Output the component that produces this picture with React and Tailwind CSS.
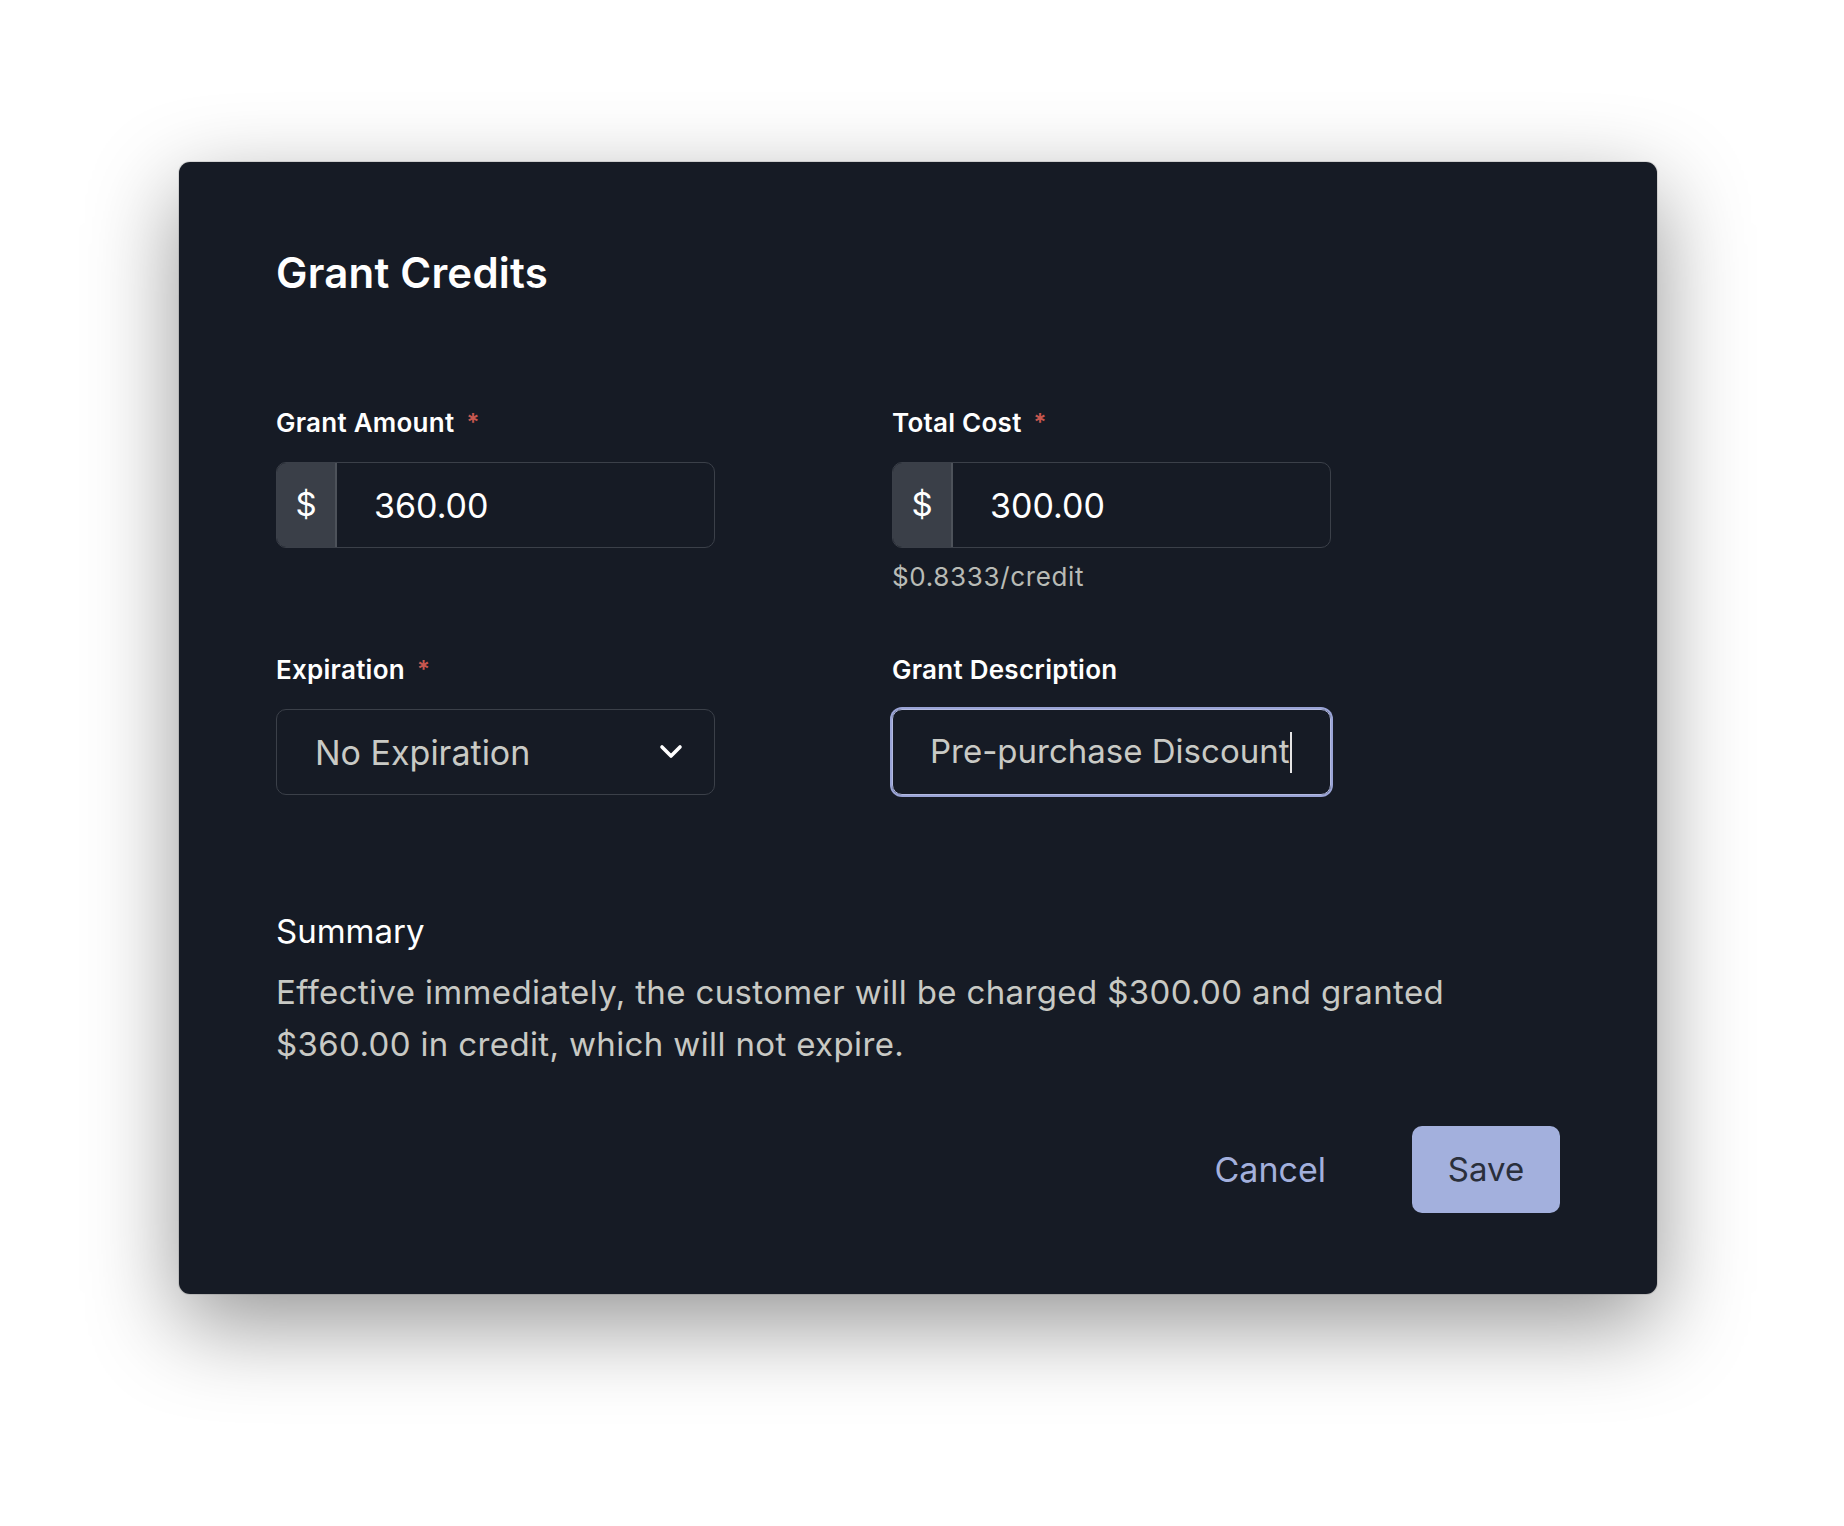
import React from "react";

const FONT = { fontFamily: "Inter, 'Noto Sans', sans-serif" };

function Label({ children, required }) {
  return (
    <div className="flex items-center h-[26px] text-[26px] leading-[26px] font-semibold text-white tracking-[0.01em] mb-[26px]">
      <span>{children}</span>
      {required && <span className="ml-[12px] text-[#c8574f] text-[24px]">*</span>}
    </div>
  );
}

function MoneyInput({ value }) {
  return (
    <div className="flex h-[86px] w-[439px] rounded-[10px] border border-[#3b4049] overflow-hidden">
      <div className="w-[60px] flex items-center justify-center bg-[#3a3f48] border-r-2 border-[#4d525a] text-white text-[33px]">
        $
      </div>
      <div className="flex-1 flex items-center pl-[37px] text-white text-[34px]">{value}</div>
    </div>
  );
}

export default function App() {
  return (
    <div style={FONT} className="min-h-[1526px] w-full bg-white pt-[162px] pl-[179px]">
      <div className="w-[1478px] rounded-[11px] bg-[#161b25] ring-1 ring-black/10 shadow-[0_30px_90px_rgba(0,0,0,0.42)] pt-[90px] pb-[81px] px-[97px]">
        <h1 className="text-[42px] leading-[42px] font-semibold text-white tracking-[0.005em]">Grant Credits</h1>

        <div className="mt-[116px] grid grid-cols-[439px_439px] gap-x-[177px] gap-y-[67px]">
          <div>
            <Label required>Grant Amount</Label>
            <MoneyInput value="360.00" />
          </div>
          <div>
            <Label required>Total Cost</Label>
            <MoneyInput value="300.00" />
            <div className="mt-[16px] text-[26px] leading-[26px] tracking-[0.025em] text-[#b9bbb6]">$0.8333/credit</div>
          </div>
          <div>
            <Label required>Expiration</Label>
            <div className="flex items-center justify-between h-[86px] w-[439px] rounded-[10px] border border-[#3b4049] pl-[38px] pr-[31px]">
              <span className="text-[34px] text-[#c9cac5]">No Expiration</span>
              <svg width="24" height="16" viewBox="0 0 24 16" fill="none">
                <polyline points="3,3 12,12 21,3" stroke="#ffffff" strokeWidth="3.6" strokeLinecap="round" strokeLinejoin="round" />
              </svg>
            </div>
          </div>
          <div>
            <Label>Grant Description</Label>
            <div className="flex items-center h-[86px] w-[439px] rounded-[10px] border border-[#b3bae0] ring-2 ring-[#9aa4d6] pl-[37px]">
              <span className="text-[33px] text-[#c9cac5]">Pre-purchase Discount</span>
              <span className="ml-[1px] w-[2px] h-[41px] bg-[#e5e5e5]" />
            </div>
          </div>
        </div>

        <div className="mt-[120px] text-[33px] leading-[33px] text-white">Summary</div>
        <p className="mt-[18px] max-w-[1240px] text-[33px] leading-[52px] tracking-[0.011em] text-[#c8c9c4]">
          Effective immediately, the customer will be charged $300.00 and granted
          <br />
          $360.00 in credit, which will not expire.
        </p>

        <div className="mt-[56px] flex justify-end items-center gap-[50px]">
          <button className="h-[87px] px-[36px] text-[34px] text-[#a3b0dd] bg-transparent">Cancel</button>
          <button className="h-[87px] w-[148px] rounded-[10px] bg-[#a3b0dd] text-[33px] text-[#2a2f3b]">Save</button>
        </div>
      </div>
    </div>
  );
}
